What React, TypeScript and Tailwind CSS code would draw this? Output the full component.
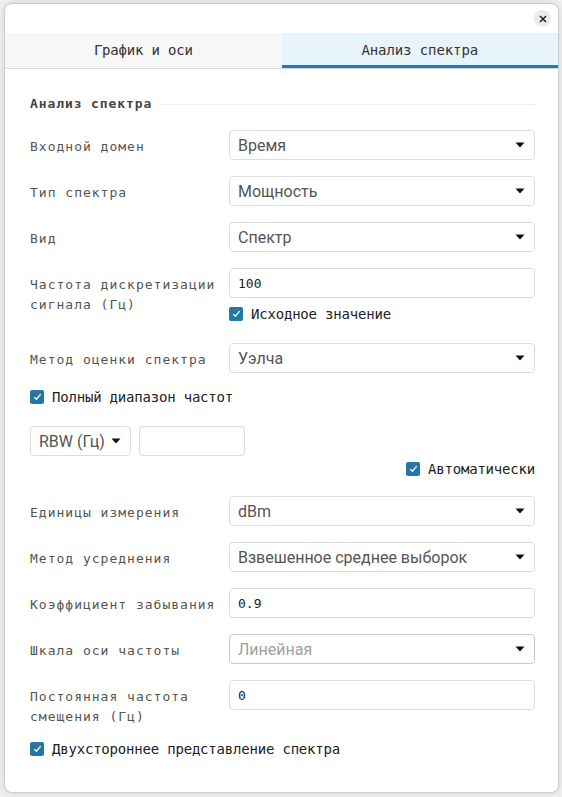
import React from 'react';

const mono = "font-['DejaVu_Sans_Mono','Liberation_Mono',monospace]";
const sans = "font-['Roboto','Noto_Sans',sans-serif]";

const Caret = () => (
  <svg width="10" height="6" viewBox="0 0 10 6" className="shrink-0">
    <path d="M0.5 0.5h9L5 5.5z" fill="#111" />
  </svg>
);

function Select({ value, disabled = false, className = '' }: { value: string; disabled?: boolean; className?: string }) {
  return (
    <div
      className={`h-[30px] flex items-center justify-between rounded-[4px] border bg-white pl-[8px] pr-[9px] ${
        disabled ? 'border-[#c9c9c9]' : 'border-[#dcdcdc]'
      } ${className}`}
    >
      <span className={`${sans} text-[16px] leading-none pt-[1px] ${disabled ? 'text-[#a0a0a0]' : 'text-[#555]'}`}>{value}</span>
      <Caret />
    </div>
  );
}

function TextInput({ value, className = '' }: { value: string; className?: string }) {
  return (
    <div className={`h-[30px] flex items-center rounded-[4px] border border-[#dcdcdc] bg-white pl-[8px] ${className}`}>
      <span className={`${mono} text-[13px] leading-none text-[#222]`}>{value}</span>
    </div>
  );
}

function Checkbox({ label, className = '' }: { label: string; className?: string }) {
  return (
    <div className={`h-[20px] flex items-center gap-[8px] ${className}`}>
      <span className="w-[14px] h-[14px] rounded-[2px] bg-[#2577a9] flex items-center justify-center shrink-0">
        <svg width="9" height="8" viewBox="0 0 9 8">
          <path d="M1.3 4.2l2.1 2 4.3-5" stroke="#fff" strokeWidth="1.3" fill="none" />
        </svg>
      </span>
      <span className={`${mono} text-[14px] leading-[20px] tracking-[-0.2px] text-[#222] whitespace-nowrap`}>{label}</span>
    </div>
  );
}

function Row({ label, children, className = '' }: { label: React.ReactNode; children: React.ReactNode; className?: string }) {
  return (
    <div className={`flex items-start ${className}`}>
      <div className={`w-[199px] shrink-0 pt-[7px] pr-[4px] ${mono} text-[13px] leading-[20px] tracking-[1px] text-[#555]`}>
        {label}
      </div>
      <div className="flex-1 min-w-0">{children}</div>
    </div>
  );
}

export default function App() {
  return (
    <div className="min-h-[797px] bg-[#efefef] pt-[3px] pl-[4px] pr-[3px] pb-[4px]">
      <div className="h-[790px] flex flex-col overflow-hidden rounded-[8px] border border-[#cfcfcf] bg-white shadow-[0_0_6px_rgba(0,0,0,0.12)]">
        <div className="h-[29px] flex items-center justify-end pr-[7px] shrink-0">
          <button className="w-[17px] h-[17px] rounded-full bg-[#ebebeb] flex items-center justify-center">
            <svg width="8" height="8" viewBox="0 0 8 8">
              <path d="M1 1l6 6M7 1L1 7" stroke="#222" strokeWidth="1.5" />
            </svg>
          </button>
        </div>

        <div className="h-[36px] flex border-b border-[#d9d9d9] shrink-0">
          <div className={`flex-1 flex items-center justify-center bg-[#f7f7f7] ${mono} text-[14px] tracking-[-0.2px] text-[#333]`}>
            График и оси
          </div>
          <div className={`flex-1 flex items-center justify-center bg-[#e8f4fb] border-b-[3px] border-[#1f7db5] pt-[3px] ${mono} text-[14px] tracking-[-0.1px] text-[#333]`}>
            Анализ спектра
          </div>
        </div>

        <div className="pl-[25px] pr-[23px] pt-[25px] flex flex-col">
          <div className="flex items-center h-[20px]">
            <span className={`${mono} font-bold text-[13px] tracking-[0.9px] text-[#444] whitespace-nowrap`}>Анализ спектра</span>
            <span className="flex-1 h-px bg-[#ececec] ml-[8px]" />
          </div>

          <Row label="Входной домен" className="mt-[16px]">
            <Select value="Время" />
          </Row>
          <Row label="Тип спектра" className="mt-[16px]">
            <Select value="Мощность" />
          </Row>
          <Row label="Вид" className="mt-[16px]">
            <Select value="Спектр" />
          </Row>
          <Row
            label={
              <>
                Частота дискретизации
                <br />
                сигнала (Гц)
              </>
            }
            className="mt-[16px]"
          >
            <TextInput value="100" />
            <Checkbox label="Исходное значение" className="mt-[6px]" />
          </Row>
          <Row label="Метод оценки спектра" className="mt-[19px]">
            <Select value="Уэлча" />
          </Row>

          <Checkbox label="Полный диапазон частот" className="mt-[14px]" />

          <div className="flex gap-[8px] mt-[19px]">
            <Select value="RBW (Гц)" className="w-[101px] gap-[6px]" />
            <TextInput value="" className="w-[106px]" />
          </div>
          <div className="flex justify-end mt-[3px]">
            <Checkbox label="Автоматически" />
          </div>

          <Row label="Единицы измерения" className="mt-[17px]">
            <Select value="dBm" />
          </Row>
          <Row label="Метод усреднения" className="mt-[16px]">
            <Select value="Взвешенное среднее выборок" />
          </Row>
          <Row label="Коэффициент забывания" className="mt-[16px]">
            <TextInput value="0.9" />
          </Row>
          <Row label="Шкала оси частоты" className="mt-[16px]">
            <Select value="Линейная" disabled />
          </Row>
          <Row
            label={
              <>
                Постоянная частота
                <br />
                смещения (Гц)
              </>
            }
            className="mt-[16px]"
          >
            <TextInput value="0" />
          </Row>

          <Checkbox label="Двухстороннее представление спектра" className="mt-[12px]" />
        </div>
      </div>
    </div>
  );
}
